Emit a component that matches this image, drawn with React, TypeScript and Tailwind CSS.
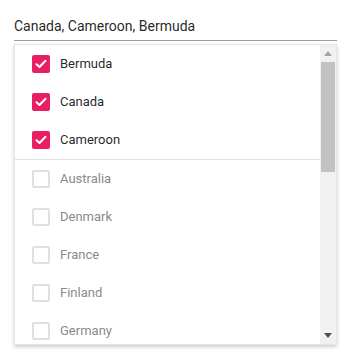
import React from 'react';

const countries = [
  { name: 'Bermuda', checked: true },
  { name: 'Canada', checked: true },
  { name: 'Cameroon', checked: true },
  { name: 'Australia', checked: false },
  { name: 'Denmark', checked: false },
  { name: 'France', checked: false },
  { name: 'Finland', checked: false },
  { name: 'Germany', checked: false },
];

const CheckRow = ({ name, checked }: { name: string; checked: boolean }) => (
  <div className="flex h-[38px] shrink-0 items-center gap-[10px] pl-[17px]">
    {checked ? (
      <span className="flex h-[18px] w-[18px] items-center justify-center rounded-[2px] bg-[#e91e63]">
        <svg width="12" height="10" viewBox="0 0 12 10" fill="none">
          <path d="M1.5 5.2 L4.5 8 L10.5 1.8" stroke="#fff" strokeWidth="2" strokeLinecap="round" strokeLinejoin="round" />
        </svg>
      </span>
    ) : (
      <span className="h-[18px] w-[18px] rounded-[2px] border-2 border-[#e0e0e0] bg-white" />
    )}
    <span className={checked ? 'text-[13px] text-[rgba(0,0,0,0.87)]' : 'text-[13px] text-[#8a8a8a]'}>{name}</span>
  </div>
);

const App = () => {
  const selected = countries.filter((c) => c.checked);
  const unselected = countries.filter((c) => !c.checked);

  return (
    <div className="h-[359px] w-[352px] bg-white" style={{ fontFamily: 'Roboto, "Noto Sans", sans-serif' }}>
      <div className="ml-[14px] w-[323px] pt-[17px]">
        <div className="border-b border-[#9e9e9e] pb-[5px] text-[14px] leading-[18px] text-[rgba(0,0,0,0.87)]">
          Canada, Cameroon, Bermuda
        </div>
        <div className="mt-[3px] flex h-[301px] border border-[#e6e6e6] bg-white shadow-[0_2px_4px_rgba(0,0,0,0.2)]">
          <div className="flex flex-1 flex-col overflow-hidden">
            {selected.map((c) => (
              <CheckRow key={c.name} {...c} />
            ))}
            <div className="h-px shrink-0 bg-[#e0e0e0]" />
            {unselected.map((c) => (
              <CheckRow key={c.name} {...c} />
            ))}
          </div>
          <div className="flex w-4 flex-col bg-[#f1f1f1]">
            <div className="flex h-[17px] items-center justify-center">
              <svg width="8" height="5" viewBox="0 0 8 5">
                <path d="M0 5 L4 0 L8 5 Z" fill="#a3a3a3" />
              </svg>
            </div>
            <div className="mx-[1px] h-[110px] bg-[#c1c1c1]" />
            <div className="flex-1" />
            <div className="flex h-[17px] items-center justify-center">
              <svg width="8" height="5" viewBox="0 0 8 5">
                <path d="M0 0 L8 0 L4 5 Z" fill="#505050" />
              </svg>
            </div>
          </div>
        </div>
      </div>
    </div>
  );
};

export default App;
